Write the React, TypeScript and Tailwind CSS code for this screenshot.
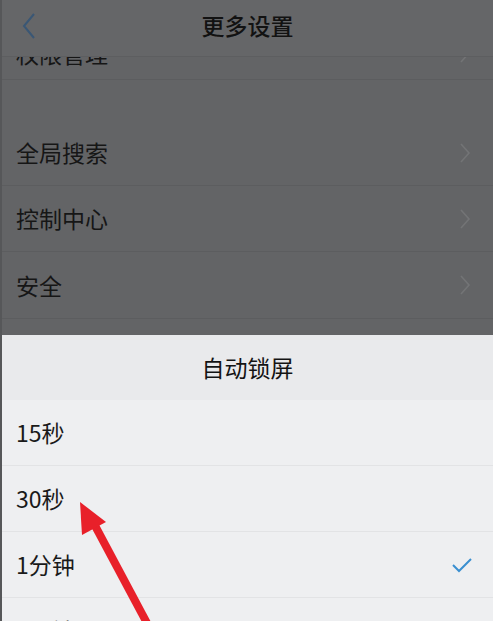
import React from "react";

const font = { fontFamily: '"Noto Sans CJK SC", "Noto Sans", sans-serif' };

function Chevron() {
  return (
    <svg width="12" height="22" viewBox="0 0 12 22" className="shrink-0">
      <path d="M2 2 L10 11 L2 20" fill="none" stroke="#737476" strokeWidth="1.6" />
    </svg>
  );
}

function DimRow({ label, last }: { label: string; last?: boolean }) {
  return (
    <div
      className={`flex h-[66px] items-center justify-between pl-[14px] pr-[22px] ${
        last ? "" : "border-b border-[#5c5d5f]"
      }`}
    >
      <span className="text-[23px] text-[#161616]">{label}</span>
      <Chevron />
    </div>
  );
}

function SheetRow({ label, checked }: { label: string; checked?: boolean }) {
  return (
    <div className="flex h-[66px] items-center justify-between border-b border-[#e2e3e5] pl-[14px] pr-[20px]">
      <span className="text-[23px] text-[#1a1a1a]">{label}</span>
      {checked && (
        <svg width="22" height="18" viewBox="0 0 22 18">
          <path d="M2 9 L8 15 L20 3" fill="none" stroke="#3a8fd0" strokeWidth="2" />
        </svg>
      )}
    </div>
  );
}

export default function App() {
  return (
    <div className="h-[621px] w-[500px] overflow-hidden bg-white" style={font}>
      <div className="relative h-full w-[493px] border-l-2 border-[#565759] bg-[#636466]">
        {/* header */}
        <div className="relative z-10 flex h-[57px] items-center justify-center border-b border-[#5d5e60] bg-[#656668] pb-[5px]">
          <svg
            width="14"
            height="26"
            viewBox="0 0 14 26"
            className="absolute left-[20px] top-[13px]"
          >
            <path d="M12 1 L2 13 L12 25" fill="none" stroke="#3a5775" strokeWidth="2" />
          </svg>
          <span className="text-[23px] font-medium text-[#121212]">更多设置</span>
        </div>

        {/* dimmed settings list */}
        <div className="-mt-[34px]">
          <div className="flex h-[57px] items-center justify-between border-b border-[#5c5d5f] pl-[14px] pr-[22px] pt-[4px]">
            <span className="text-[23px] text-[#161616]">权限管理</span>
            <Chevron />
          </div>
          <div className="h-[40px]" />
          <DimRow label="全局搜索" />
          <DimRow label="控制中心" />
          <DimRow label="安全" last />
          <div className="h-[17px] border-t border-[#5c5d5f]" />
        </div>

        {/* action sheet */}
        <div className="bg-[#eeeff1]">
          <div className="flex h-[65px] items-center justify-center bg-[#e9eaec]">
            <span className="text-[23px] text-[#141414]">自动锁屏</span>
          </div>
          <SheetRow label="15秒" />
          <SheetRow label="30秒" />
          <SheetRow label="1分钟" checked />
          <SheetRow label="2分钟" />
        </div>

        {/* red arrow annotation */}
        <svg
          width="120"
          height="140"
          viewBox="0 0 120 140"
          className="absolute left-[60px] top-[490px]"
        >
          <line x1="30" y1="30" x2="86" y2="135" stroke="#e8202a" strokeWidth="8" />
          <polygon points="18,12 20,45 44,32" fill="#e8202a" />
        </svg>
      </div>
    </div>
  );
}
